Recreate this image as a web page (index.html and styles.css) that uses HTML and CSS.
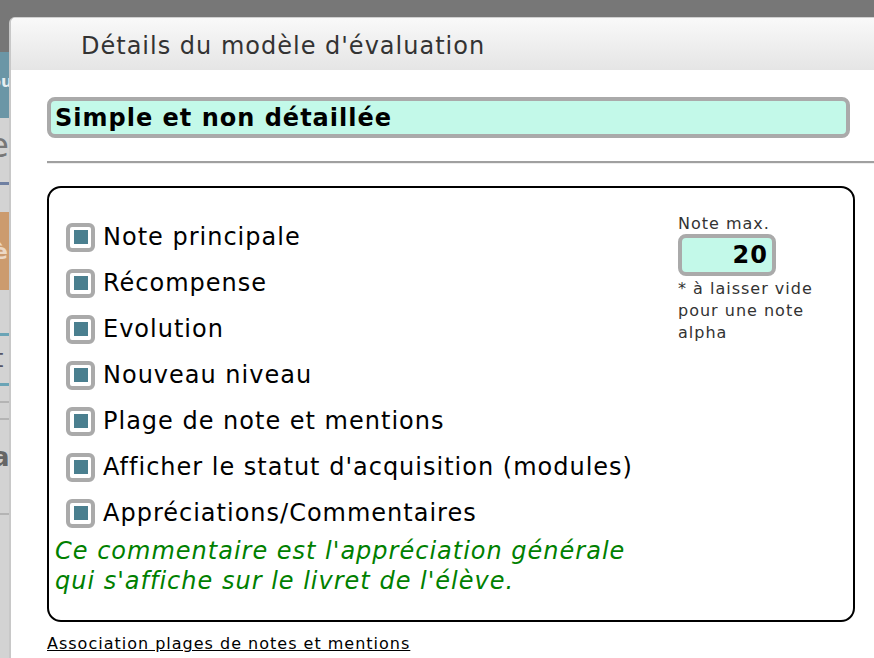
FILE: index.html
```html
<!DOCTYPE html>
<html lang="fr">
<head>
    <meta charset="UTF-8">
    <meta name="viewport" content="width=device-width, initial-scale=1.0">
    <title>Détails du modèle d'évaluation</title>
    <link rel="stylesheet" href="styles.css">
</head>
<body>

<div class="screen">
    <!-- page behind the dialog, only a sliver shows -->
    <div class="under">
        <div class="u-dark"></div>
        <div class="u-teal"><span>ou</span></div>
        <div class="u-grey u-big"><span>e</span></div>
        <div class="u-line"></div>
        <div class="u-grey u-gap"></div>
        <div class="u-orange"><span>è</span></div>
        <div class="u-grey u-gap2"></div>
        <div class="u-tab"></div>
        <div class="u-grey u-txt"><span>t</span></div>
        <div class="u-tab"></div>
        <div class="u-grey u-sep"></div>
        <div class="u-grey u-sep"></div>
        <div class="u-grey u-bold"><span>a</span></div>
        <div class="u-grey u-sep"></div>
        <div class="u-grey u-rest"></div>
    </div>

    <div class="dialog">
        <div class="dialog-head">Détails du modèle d'évaluation</div>

        <div class="dialog-body">
            <input type="text" class="nom" value="Simple et non détaillée">
            <hr class="sep">

            <div class="cadre">
                <div class="colonne">
                    <ul class="options">
                        <li><span class="check"></span>Note principale</li>
                        <li><span class="check"></span>Récompense</li>
                        <li><span class="check"></span>Evolution</li>
                        <li><span class="check"></span>Nouveau niveau</li>
                        <li><span class="check"></span>Plage de note et mentions</li>
                        <li><span class="check"></span>Afficher le statut d'acquisition (modules)</li>
                        <li><span class="check"></span>Appréciations/Commentaires</li>
                    </ul>
                    <p class="aide">Ce commentaire est l'appréciation générale<br>qui s'affiche sur le livret de l'élève.</p>
                </div>

                <div class="cote">
                    <label for="max">Note max.</label>
                    <input type="text" id="max" class="max" value="20">
                    <p class="remarque">* à laisser vide<br>pour une note<br>alpha</p>
                </div>
            </div>

            <a href="#" class="lien">Association plages de notes et mentions</a>
        </div>
    </div>
</div>

</body>
</html>
```

FILE: styles.css
```css
html, body {
    margin: 0;
    height: 100%;
    overflow: hidden;
}
body {
    background-color: #777;
    font-family: "DejaVu Sans", Verdana, sans-serif;
    letter-spacing: 1px;
}
.screen {
    display: flex;
    height: 658px;
}

/* sliver of the page underneath */
.under {
    width: 9px;
    flex: none;
    display: flex;
    flex-direction: column;
    overflow: hidden;
    background-color: #d3d3d3;
    letter-spacing: 0;
}
.under div {
    overflow: hidden;
    white-space: nowrap;
    flex: none;
}
.u-dark {
    height: 52px;
    background-color: #777;
}
.u-teal {
    height: 66px;
    background-color: #6b96a6;
    color: #e6eef1;
    font-size: 16px;
    font-weight: bold;
    line-height: 60px;
    text-indent: -10px;
}
.u-grey {
    background-color: #d3d3d3;
}
.u-big {
    height: 64px;
    color: #777;
    font-size: 34px;
    line-height: 54px;
    text-indent: -12px;
}
.u-line {
    height: 3px;
    background-color: #6f80a2;
}
.u-gap {
    height: 27px;
}
.u-orange {
    height: 78px;
    background-color: #cc9b6e;
    color: #ecd8c5;
    font-size: 22px;
    font-weight: bold;
    line-height: 80px;
    text-indent: -7px;
}
.u-gap2 {
    height: 43px;
}
.u-tab {
    height: 3px;
    background-color: #6aa4b6;
}
.u-txt {
    height: 47px;
    color: #556;
    font-size: 24px;
    line-height: 46px;
    text-indent: -6px;
}
.u-sep {
    height: 15px;
    border-bottom: 2px solid #b4b4b4;
}
.u-bold {
    height: 78px;
    color: #666;
    font-size: 26px;
    font-weight: bold;
    line-height: 74px;
    text-indent: -8px;
}
.u-rest {
    flex: 1 !important;
}

/* dialog */
.dialog {
    flex: none;
    width: 900px;
    margin-top: 17px;
    background-color: #fff;
    border-left: 2px solid #c8c8c8;
    border-top: 1px solid #d0d0d0;
    border-top-left-radius: 6px;
    overflow: hidden;
}
.dialog-head {
    height: 52px;
    line-height: 56px;
    padding-left: 70px;
    font-size: 24px;
    color: #333;
    background: linear-gradient(#f9f9f9, #e5e5e5);
}
.dialog-body {
    padding: 27px 0 0 36px;
}
.nom {
    display: block;
    box-sizing: border-box;
    width: 803px;
    height: 41px;
    margin: 0;
    padding: 0 4px;
    border: 4px solid #aaa;
    border-radius: 8px;
    background-color: #c3f9e9;
    font-family: "DejaVu Sans", Verdana, sans-serif;
    font-size: 24px;
    font-weight: bold;
    letter-spacing: 1px;
    color: #000;
    outline: none;
}
.sep {
    margin: 23px 0 0 0;
    border: none;
    border-top: 2px solid #a0a0a0;
    border-bottom: 1px solid #eee;
}
.cadre {
    box-sizing: border-box;
    width: 808px;
    margin-top: 22px;
    border: 2px solid #000;
    border-radius: 14px;
    padding: 26px 0 24px 6px;
    display: grid;
    grid-template-columns: 623px 1fr;
}
.options {
    list-style: none;
    margin: 0;
    padding: 0 0 0 11px;
}
.options li {
    height: 46px;
    display: flex;
    align-items: center;
    gap: 8px;
    font-size: 24px;
    color: #000;
}
.check {
    box-sizing: border-box;
    width: 29px;
    height: 29px;
    border: 4px solid #aaa;
    border-radius: 6px;
    background-color: #fff;
    display: flex;
    align-items: center;
    justify-content: center;
}
.check::after {
    content: "";
    width: 14px;
    height: 14px;
    background-color: #4a7f8f;
}
.aide {
    margin: 0;
    font-size: 24px;
    line-height: 30px;
    font-style: italic;
    color: #008000;
}
.cote {
    color: #333;
    font-size: 16px;
}
.cote label {
    display: block;
    line-height: 20px;
}
.max {
    display: block;
    box-sizing: border-box;
    width: 98px;
    height: 42px;
    margin: 0;
    padding: 0 4px;
    border: 4px solid #aaa;
    border-radius: 8px;
    background-color: #c3f9e9;
    text-align: right;
    font-family: "DejaVu Sans", Verdana, sans-serif;
    font-size: 24px;
    font-weight: bold;
    letter-spacing: 1px;
    color: #000;
    outline: none;
}
.remarque {
    margin: 2px 0 0 0;
    line-height: 22px;
}
.lien {
    display: inline-block;
    margin-top: 12px;
    font-size: 16px;
    line-height: 20px;
    color: #000;
}
```
